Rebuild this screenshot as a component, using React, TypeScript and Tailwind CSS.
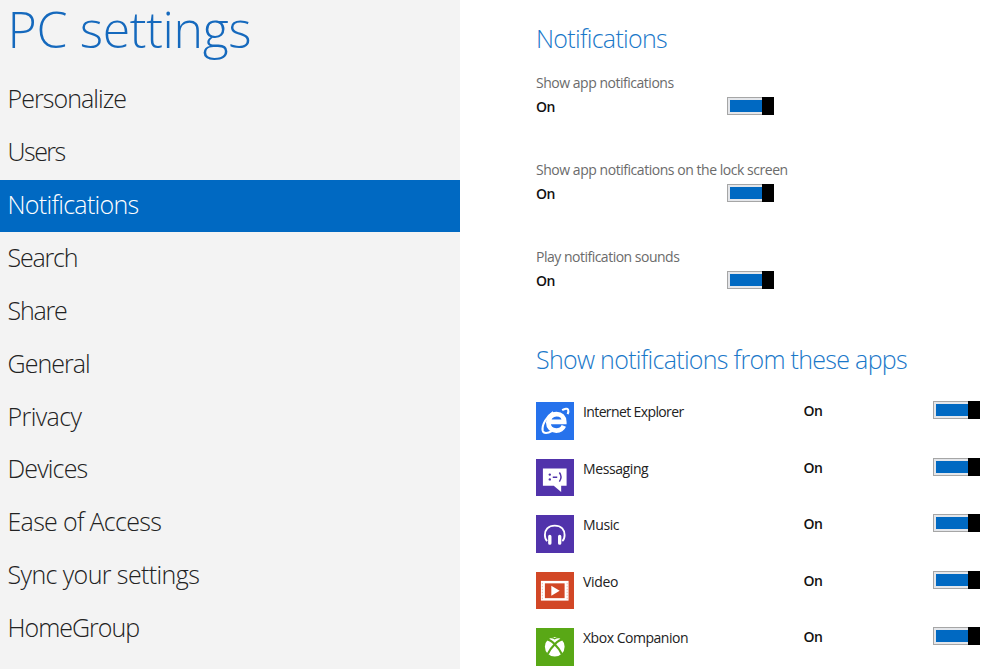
import { ReactNode } from 'react';
import clsx from 'clsx';

const menu = [
    { label: 'Personalize', spacing: 'tracking-[-0.95px]' },
    { label: 'Users', spacing: 'tracking-[-1.5px]' },
    { label: 'Notifications', spacing: 'tracking-[-0.7px]' },
    { label: 'Search', spacing: 'tracking-[-1.2px]' },
    { label: 'Share', spacing: 'tracking-[-1.2px]' },
    { label: 'General', spacing: 'tracking-[-0.95px]' },
    { label: 'Privacy', spacing: 'tracking-[-0.6px]' },
    { label: 'Devices', spacing: 'tracking-[-0.85px]' },
    { label: 'Ease of Access', spacing: 'tracking-[-0.7px]' },
    { label: 'Sync your settings', spacing: 'tracking-[-0.6px]' },
    { label: 'HomeGroup', spacing: 'tracking-[-1px]' },
];

const options = [
    { label: 'Show app notifications', spacing: 'tracking-[-0.48px]' },
    { label: 'Show app notifications on the lock screen', spacing: 'tracking-[-0.46px]' },
    { label: 'Play notification sounds', spacing: 'tracking-[-0.5px]' },
];

const IeIcon = () => (
    <svg viewBox="0 0 38 38" className="h-full w-full" fill="none" stroke="white">
        <path d="M28.200 24.200C26.800 27.400 24 29 20.600 29c-4.700 0-8.100-3.400-8.100-8.200s3.500-8.500 8.300-8.500c4.700 0 7.800 3 7.800 7.900H14" strokeWidth="4.800" />
        <path d="M26.500 8.300c2.800-1.700 5.300-2 6-0.600 0.500 1.100 0.300 2.800-0.400 4.500M17.500 10.300C11.500 14 5.500 23 6.800 29.200c0.800 3.300 5.200 2.600 9.200 0.300" strokeWidth="2.100" />
    </svg>
);

const MessagingIcon = () => (
    <svg viewBox="0 0 38 38" className="h-full w-full">
        <path d="M7 9.500h24v17.500h-5.500v6.500l-7.500-6.500H7z" fill="white" />
        <circle cx="14" cy="15.800" r="1.200" fill="#5133ab" />
        <circle cx="14" cy="20.700" r="1.200" fill="#5133ab" />
        <path d="M17 18.500h4.500M23.700 13.700q3.400 4.600 0 9.200" fill="none" stroke="#5133ab" strokeWidth="1.500" />
    </svg>
);

const MusicIcon = () => (
    <svg viewBox="0 0 38 38" className="h-full w-full" fill="none" stroke="white">
        <path d="M11.300 26.500C8.300 24 8.200 17 11.400 13.600 15.200 9.900 22.800 9.900 26.600 13.600c3.200 3.400 3.100 10.400 0.100 12.900" strokeWidth="1.900" />
        <path d="M14 21.800v6.700M24 21.800v6.700" strokeWidth="3.400" strokeLinecap="round" />
    </svg>
);

const VideoIcon = () => (
    <svg viewBox="0 0 38 38" className="h-full w-full">
        <path d="M5 9h28v20H5z" fill="white" />
        <path d="M9 11.500h20v15H9z" fill="#d24726" />
        <path d="M6.400 11v17M31.600 11v17" stroke="#d24726" strokeOpacity="0.500" strokeWidth="0.800" strokeDasharray="1.500 1.500" />
        <path d="M15.500 14l8.500 5-8.500 5z" fill="white" />
    </svg>
);

const XboxIcon = () => (
    <svg viewBox="0 0 38 38" className="h-full w-full">
        <circle cx="19" cy="19" r="10" fill="white" />
        <path d="M11.300 11.600c4 0.400 11.500 7.600 14.800 14.700M26.700 11.600c-4 0.400-11.500 7.600-14.800 14.700" fill="none" stroke="#59a816" strokeWidth="2.200" />
        <path d="M14.500 9.800q2.500-0.300 4.500 1.100 2-1.400 4.500-1.100" fill="none" stroke="#59a816" strokeWidth="1.200" />
    </svg>
);

const apps = [
    { name: 'Internet Explorer', color: 'bg-[#2672ec]', icon: <IeIcon />, spacing: 'tracking-[-0.62px]' },
    { name: 'Messaging', color: 'bg-[#5133ab]', icon: <MessagingIcon />, spacing: 'tracking-[-0.4px]' },
    { name: 'Music', color: 'bg-[#5133ab]', icon: <MusicIcon />, spacing: 'tracking-[-0.4px]' },
    { name: 'Video', color: 'bg-[#d24726]', icon: <VideoIcon />, spacing: 'tracking-[-0.3px]' },
    { name: 'Xbox Companion', color: 'bg-[#59a816]', icon: <XboxIcon />, spacing: 'tracking-[-0.48px]' },
];

const Toggle = () => (
    <button className="flex h-[18px] w-[47px] shrink-0">
        <span className="h-full grow border border-r-0 border-[#a6a6a6] bg-[#e4e6ea] py-[2px] pl-[2px]">
            <span className="block h-full bg-[#0069c2]" />
        </span>
        <span className="h-full w-3 bg-black" />
    </button>
);

const OnLabel = () => <span className="block text-[14px] leading-5 font-semibold tracking-[-0.5px] text-[#111]">On</span>;

const Heading = ({ children, className }: { children: ReactNode; className: string }) => (
    <h2 className={clsx('text-[25px] leading-8 font-light whitespace-nowrap text-[#1a78c9]', className)}>{children}</h2>
);

const App = () => {
    return (
        <div className="flex h-[670px] w-[984px] overflow-hidden bg-white font-['Open_Sans',sans-serif]">
            {/* Left menu */}
            <aside className="h-[669px] w-[460px] bg-[#f3f3f3]">
                <h1 className="h-[73.800px] pl-[7.500px] text-[50px] leading-[58px] font-light tracking-[-0.35px] text-[#1569bd]">PC settings</h1>
                <nav>
                    {menu.map((item) => (
                        <div
                            key={item.label}
                            className={clsx(
                                'flex h-[52.900px] items-center pl-[7.500px] pb-[2.600px] text-[25px] font-light',
                                item.spacing,
                                item.label === 'Notifications' ? 'bg-[#0069c2] text-white' : 'text-[#222]'
                            )}
                        >
                            {item.label}
                        </div>
                    ))}
                </nav>
            </aside>

            <main className="w-[524px] pt-[22px] pl-[76px]">
                <Heading className="tracking-[-0.7px]">Notifications</Heading>

                {/* Global switches */}
                <div className="pt-[19px]">
                    {options.map((option) => (
                        <div key={option.label} className="h-[87px]">
                            <div className={clsx('h-[24px] text-[14px] leading-5 whitespace-nowrap text-[#6b6b6b]', option.spacing)}>{option.label}</div>
                            <div className="flex w-[238px] justify-between">
                                <OnLabel />
                                <Toggle />
                            </div>
                        </div>
                    ))}
                </div>

                {/* Per-app switches */}
                <Heading className="pt-[9px] tracking-[-0.7px]">Show notifications from these apps</Heading>
                <div className="pt-[26px]">
                    {apps.map((app) => (
                        <div key={app.name} className="flex h-[56.600px] items-start">
                            <div className={clsx('mt-px h-[37.500px] w-[37.500px] shrink-0', app.color)}>{app.icon}</div>
                            <div className={clsx('w-[221px] pt-px pl-[9.500px] text-[14px] leading-5 whitespace-nowrap text-[#222]', app.spacing)}>{app.name}</div>
                            <div className="w-[138.500px] pl-[9px]"><OnLabel /></div>
                            <Toggle />
                        </div>
                    ))}
                </div>
            </main>
        </div>
    )
}

export default App
